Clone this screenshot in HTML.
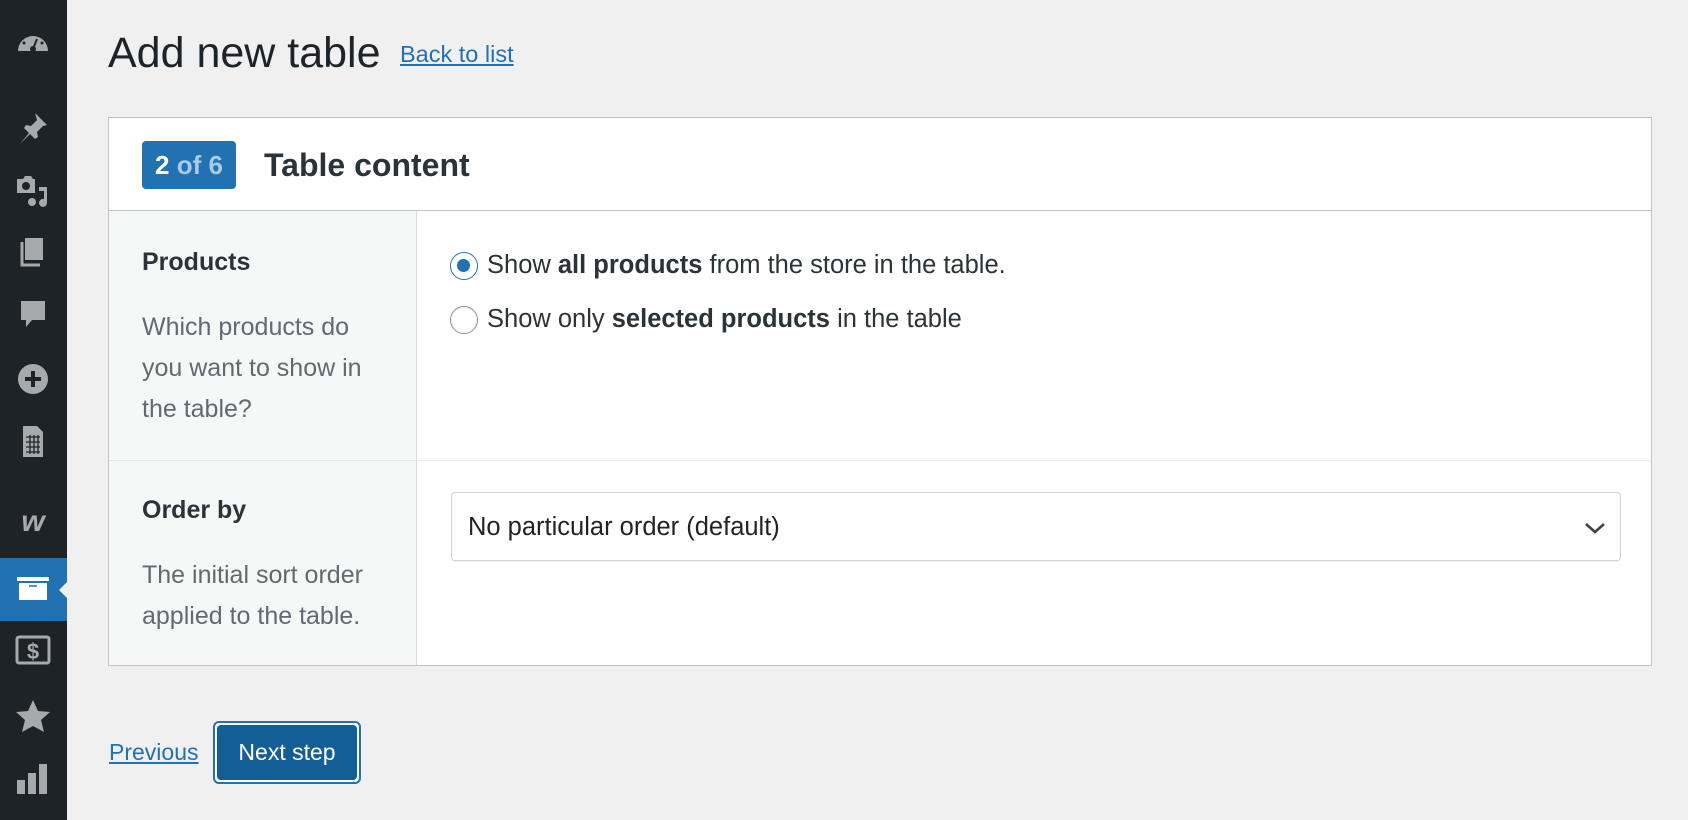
<!DOCTYPE html>
<html><head><meta charset="utf-8"><style>
*{box-sizing:border-box;margin:0;padding:0}
body{width:1688px;height:820px;background:#f0f0f1;font-family:"Liberation Sans",sans-serif;color:#1d2327;position:relative;overflow:hidden}
.sb{position:absolute;left:0;top:0;width:67px;height:820px;background:#1d2327}
.ic{position:absolute;left:15px;width:36px;height:36px}
.act{position:absolute;left:0;top:558px;width:67px;height:63px;background:#2271b1}
.act:after{content:"";position:absolute;right:0;top:24px;border:8px solid transparent;border-right-color:#f0f0f1}
h1{position:absolute;left:108px;top:29px;font-size:43px;font-weight:400;color:#1d2327}
a{color:#2271b1;text-decoration:underline}
.back{position:absolute;left:400px;top:41px;font-size:23.5px}
.card{position:absolute;left:108px;top:117px;width:1544px;height:549px;background:#fff;border:1px solid #c3c4c7}
.hdr{position:absolute;left:0;top:0;width:100%;height:93px;border-bottom:1px solid #c3c4c7}
.badge{position:absolute;left:33px;top:23px;width:94px;height:48px;background:#2271b1;border-radius:4px;color:#fff;font-size:26px;font-weight:700;text-align:center;line-height:48px}
.badge span{color:#a9c9e8}
.ht{position:absolute;left:155px;top:29px;font-size:32px;font-weight:700;color:#2c3338}
.lc{position:absolute;left:0;width:308px;background:#f6f7f7;border-right:1px solid #dcdcde}
.r1{top:93px;height:250px;border-bottom:1px solid #e4e4e6}
.r2{top:343px;height:204px}
.lab{position:absolute;left:33px;font-size:25px;font-weight:700;color:#2c3338}
.desc{position:absolute;left:33px;font-size:25px;line-height:41px;color:#646970;width:235px}
.rd{position:absolute;left:341px;width:28px;height:28px;border-radius:50%;border:1.5px solid #8c8f94;background:#fff}
.rd.on{border-color:#2271b1}
.rd.on:after{content:"";position:absolute;left:6px;top:6px;width:13px;height:13px;border-radius:50%;background:#2271b1}
.rt{position:absolute;left:378px;font-size:25.5px;color:#2c3338}
.sel{position:absolute;left:342px;top:374px;width:1170px;height:69px;border:1px solid #d0d3d8;border-radius:4px;background:#fff;font-size:25.5px;color:#1d2327;padding:20px 0 0 16px;box-shadow:0 1px 1px rgba(0,0,0,.05)}
.prev{position:absolute;left:109px;top:739px;font-size:23px}
.btn{position:absolute;left:213px;top:721px;width:148px;height:63px;border:2px solid #2271b1;border-radius:6px;background:#fff;padding:2px}
.btn div{width:100%;height:100%;background:#135e96;border-radius:4px;color:#fff;font-size:23px;text-align:center;line-height:55px}
</style></head><body>
<div class="sb">
<div class="act"></div>
<svg class="ic" style="top:25px" viewBox="0 0 36 36"><path d="M3 26a15 15 0 1 1 30 0z" fill="#a7aaad"/><circle cx="18" cy="24" r="3" fill="#1d2327"/><path d="M18 24l4-10" stroke="#1d2327" stroke-width="2"/><circle cx="9" cy="18" r="1.5" fill="#1d2327"/><circle cx="12" cy="11" r="1.5" fill="#1d2327"/><circle cx="27" cy="18" r="1.5" fill="#1d2327"/></svg>
<svg class="ic" style="top:109px" viewBox="0 0 36 36"><path d="M20 4l12 12-4 1-6 6 1 5-3 2-5-5-10 10 9-11-5-5 2-3 5 1 6-6z" fill="#a7aaad"/></svg>
<svg class="ic" style="top:173px" viewBox="0 0 36 36"><path d="M2 6h6l2-3h6l2 3h2v14H2z" fill="#a7aaad"/><circle cx="11" cy="13" r="4" fill="#1d2327"/><path d="M24 14h8v16a4 4 0 1 1-3-4V18h-5z" fill="#a7aaad"/><circle cx="17" cy="29" r="4" fill="#a7aaad"/></svg>
<svg class="ic" style="top:234px" viewBox="0 0 36 36"><rect x="10" y="4" width="18" height="22" fill="#a7aaad"/><path d="M7 8v23h18" stroke="#a7aaad" stroke-width="3" fill="none"/></svg>
<svg class="ic" style="top:296px" viewBox="0 0 36 36"><path d="M6 5h24v19H17l-6 7v-7H6z" fill="#a7aaad"/></svg>
<svg class="ic" style="top:361px" viewBox="0 0 36 36"><circle cx="18" cy="18" r="15" fill="#a7aaad"/><path d="M18 10v16M10 18h16" stroke="#1d2327" stroke-width="4"/></svg>
<svg class="ic" style="top:423px" viewBox="0 0 36 36"><path d="M8 3h14l6 6v25H8z" fill="#a7aaad"/><path d="M11 14h14M11 19h14M11 24h14M11 29h14M15 12v19M19 12v19M23 12v19" stroke="#1d2327" stroke-width="1.3"/></svg>
<svg class="ic" style="top:503px" viewBox="0 0 36 36"><text x="18" y="28" text-anchor="middle" font-family="Liberation Sans" font-style="italic" font-weight="700" font-size="30" fill="#a7aaad">w</text></svg>
<svg class="ic" style="top:571px" viewBox="0 0 36 36"><rect x="2" y="6" width="32" height="4" fill="#fff"/><rect x="4" y="12" width="28" height="17" fill="#fff"/><path d="M14 15h8" stroke="#2271b1" stroke-width="1.5"/></svg>
<svg class="ic" style="top:632px" viewBox="0 0 36 36"><rect x="2" y="5" width="32" height="26" rx="2" fill="none" stroke="#a7aaad" stroke-width="3"/><text x="18" y="27" text-anchor="middle" font-weight="700" font-size="22" fill="#a7aaad" font-family="Liberation Sans">$</text></svg>
<svg class="ic" style="top:698px" viewBox="0 0 36 36"><path d="M18 2l5 11 12 1-9 8 3 12-11-6-11 6 3-12-9-8 12-1z" fill="#a7aaad"/></svg>
<svg class="ic" style="top:760px" viewBox="0 0 36 36"><rect x="2" y="20" width="8" height="14" fill="#a7aaad"/><rect x="13" y="13" width="8" height="21" fill="#a7aaad"/><rect x="24" y="4" width="8" height="30" fill="#a7aaad"/></svg>
</div>
<h1>Add new table</h1>
<a class="back">Back to list</a>
<div class="card">
<div class="hdr"><div class="badge">2 <span>of 6</span></div><div class="ht">Table content</div></div>
<div class="lc r1"><div class="lab" style="top:37px">Products</div><div class="desc" style="top:96px">Which products do you want to show in the table?</div></div>
<div class="lc r2"><div class="lab" style="top:35px">Order by</div><div class="desc" style="top:94px">The initial sort order applied to the table.</div></div>
<div class="rd on" style="top:134px"></div><div class="rt" style="top:133px">Show <b>all products</b> from the store in the table.</div>
<div class="rd" style="top:188px"></div><div class="rt" style="top:187px">Show only <b>selected products</b> in the table</div>
<div style="position:absolute;left:308px;right:0;top:342px;border-top:1px solid #ececec"></div>
<div class="sel">No particular order (default)<svg style="position:absolute;right:14px;top:28px" width="22" height="14" viewBox="0 0 22 14"><path d="M2 3l9 8 9-8" stroke="#3c434a" stroke-width="2.6" fill="none"/></svg></div>
</div>
<a class="prev">Previous</a>
<div class="btn"><div>Next step</div></div>
</body></html>
